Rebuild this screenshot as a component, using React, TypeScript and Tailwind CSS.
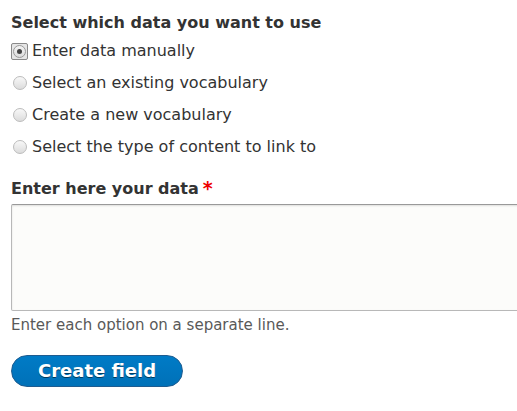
import React from "react";

function Radio({ checked }: { checked?: boolean }) {
  if (checked) {
    return (
      <span className="flex h-[17px] w-[17px] items-center justify-center rounded-[2px] border border-[#8a8a8a] bg-[#e6e6e6]">
        <span className="flex h-[13px] w-[13px] items-center justify-center rounded-full border border-[#9a9a9a] bg-[linear-gradient(#f4f4f4,#dcdcdc)]">
          <span className="h-[5px] w-[5px] rounded-full bg-[#444]" />
        </span>
      </span>
    );
  }
  return (
    <span className="flex h-[17px] w-[17px] items-center justify-center">
      <span className="h-[14px] w-[14px] rounded-full border border-[#bcbcbc] bg-[linear-gradient(#f8f8f8,#dcdcdc)]" />
    </span>
  );
}

export default function App() {
  const options = [
    "Enter data manually",
    "Select an existing vocabulary",
    "Create a new vocabulary",
    "Select the type of content to link to",
  ];
  return (
    <div className="h-[411px] w-[517px] overflow-hidden bg-white font-['DejaVu_Sans',sans-serif] text-[#333]">
      <div className="pl-[11px] pt-[13px]">
        <div className="text-[16px] font-bold leading-[20px]">Select which data you want to use</div>
        <div className="mt-[2px] flex flex-col">
          {options.map((o, i) => (
            <div key={o} className="flex h-[32px] items-center gap-[4px]">
              <Radio checked={i === 0} />
              <span className="text-[16px] leading-[20px]">{o}</span>
            </div>
          ))}
        </div>
        <div className="mt-[16px] flex items-start text-[16px] font-bold leading-[20px]">
          <span>Enter here your data</span>
          <span className="ml-[4px] text-[19px] leading-[18px] text-[#e00]">*</span>
        </div>
        <div className="mt-[5px] h-[107px] w-[520px] rounded-[2px] border border-[#b8b8b8] border-t-[#999] bg-[#fcfcfa] shadow-[inset_0_1px_2px_rgba(0,0,0,0.12)]" />
        <div className="mt-[5px] text-[15px] leading-[18px] text-[#595959]">Enter each option on a separate line.</div>
        <button className="mt-[21px] flex h-[32px] w-[172px] items-center justify-center rounded-full border border-[#1e5c90] bg-[linear-gradient(#007bc6,#0071b8)] pb-[1px] text-[18px] font-bold leading-[20px] text-white [text-shadow:0_1px_hsla(0,0%,0%,0.5)]">
          Create field
        </button>
      </div>
    </div>
  );
}
